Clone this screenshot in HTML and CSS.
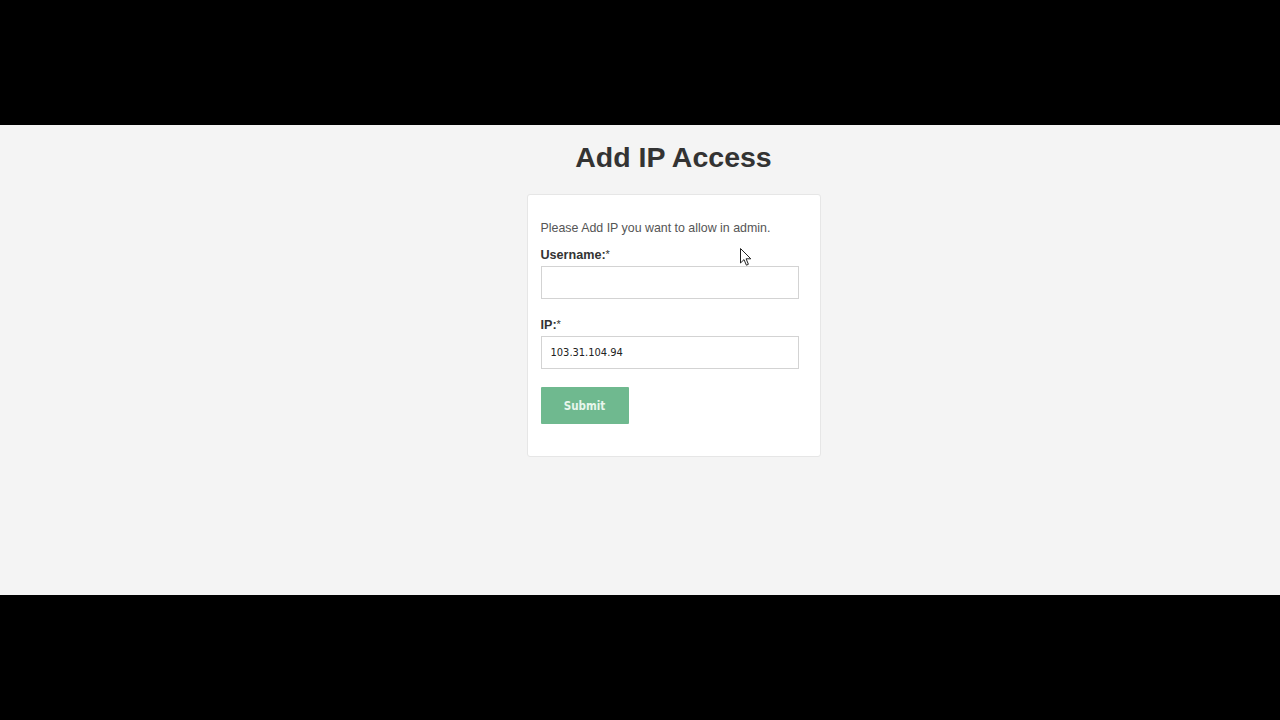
FILE: index.html
```html
<!DOCTYPE html>
<html>
<head>
<meta charset="utf-8">
<title>Add IP Access</title>
<link rel="stylesheet" href="styles.css">
</head>
<body>
<div class="bar"></div>
<main class="stage">
  <h1 class="title">Add IP Access</h1>
  <form class="card">
    <p class="intro">Please Add IP you want to allow in admin.</p>
    <label class="label first">Username:<span class="req">*</span></label>
    <input class="field" type="text" value="">
    <label class="label">IP:<span class="req">*</span></label>
    <input class="field" type="text" value="103.31.104.94">
    <button class="submit" type="button">Submit</button>
  </form>
  <svg class="cursor" width="12" height="19" viewBox="0 0 12 19">
    <path d="M0.5 0.5 L0.5 15 L4 11.6 L6.4 17.2 L8.4 16.3 L6.1 10.8 L10.8 10.8 Z" fill="#fff" stroke="#222" stroke-width="1" stroke-linejoin="round"/>
  </svg>
</main>
<div class="bar"></div>
</body>
</html>
```

FILE: styles.css
```css
html, body {
  margin: 0;
  padding: 0;
  background: #000;
}
.bar {
  height: 125px;
  background: #000;
}
.stage {
  position: relative;
  box-sizing: border-box;
  height: 470px;
  padding-left: 67px;
  background: #f4f4f4;
  display: flex;
  flex-direction: column;
  align-items: center;
  font-family: "Liberation Sans", Arial, sans-serif;
  color: #333;
}
.title {
  margin: 16px 0 0 0;
  font-size: 28.5px;
  line-height: 32px;
  font-weight: bold;
  color: #333;
  text-align: center;
}
.card {
  margin-top: 21px;
  width: 259px;
  padding: 24px 20px 32px 13px;
  background: #fff;
  border: 1px solid #e6e6e6;
  border-radius: 3px;
  display: flex;
  flex-direction: column;
  align-items: flex-start;
}
.intro {
  margin: 0;
  font-size: 12.4px;
  line-height: 18px;
  color: #555;
}
.label {
  margin-top: 16px;
  margin-bottom: 2px;
  font-size: 12.6px;
  line-height: 18px;
  font-weight: bold;
  color: #333;
}
.label.first {
  margin-top: 8px;
}
.req {
  font-weight: normal;
  font-size: 11px;
  vertical-align: 1px;
}
.field {
  box-sizing: border-box;
  width: 258px;
  height: 33px;
  margin: 0;
  padding: 0 9px;
  border: 1px solid #d3d3d3;
  background: #fff;
  font-family: "DejaVu Sans Condensed", "DejaVu Sans", sans-serif;
  font-size: 11px;
  color: #222;
  outline: none;
}
.submit {
  margin-top: 18px;
  width: 88px;
  height: 37px;
  border: none;
  border-radius: 1px;
  background: #6fb98f;
  color: #e8f6ec;
  font-family: "DejaVu Sans Condensed", "DejaVu Sans", sans-serif;
  font-weight: bold;
  font-size: 11.5px;
  padding: 0;
}
.cursor {
  position: absolute;
  left: 740px;
  top: 123px;
}
```
